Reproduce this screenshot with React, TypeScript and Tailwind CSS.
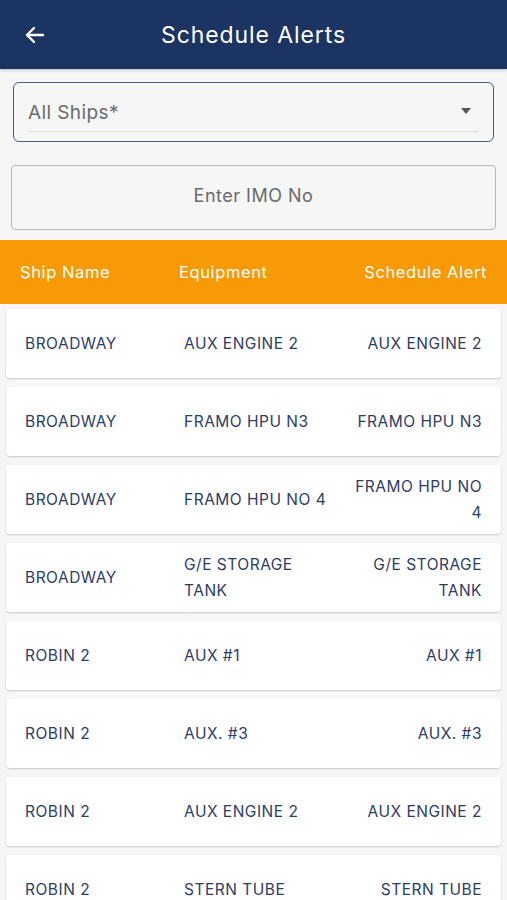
import React from "react";

const rows: [string, string[], string[]][] = [
  ["BROADWAY", ["AUX ENGINE 2"], ["AUX ENGINE 2"]],
  ["BROADWAY", ["FRAMO HPU N3"], ["FRAMO HPU N3"]],
  ["BROADWAY", ["FRAMO HPU NO 4"], ["FRAMO HPU NO", "4"]],
  ["BROADWAY", ["G/E STORAGE", "TANK"], ["G/E STORAGE", "TANK"]],
  ["ROBIN 2", ["AUX #1"], ["AUX #1"]],
  ["ROBIN 2", ["AUX. #3"], ["AUX. #3"]],
  ["ROBIN 2", ["AUX ENGINE 2"], ["AUX ENGINE 2"]],
  ["ROBIN 2", ["STERN TUBE"], ["STERN TUBE"]],
];

export default function App() {
  return (
    <div
      className="w-[507px] h-[900px] overflow-hidden bg-[#f6f6f6]"
      style={{ fontFamily: "Inter, 'Open Sans', sans-serif" }}
    >
      <div className="h-[69px] bg-[#1c3461] flex items-center relative shadow-[0_1px_3px_rgba(0,0,0,0.25)]">
        <svg
          className="absolute left-[23px] top-[23px]"
          width="24"
          height="24"
          viewBox="0 0 24 24"
          fill="none"
          stroke="white"
          strokeWidth="2.4"
          strokeLinecap="round"
          strokeLinejoin="round"
        >
          <path d="M20 12H4.5" />
          <path d="M11 5l-7 7 7 7" />
        </svg>
        <div className="w-full text-center text-white text-[23px] tracking-[0.9px] pt-[1px]">Schedule Alerts</div>
      </div>

      <div className="mx-[13px] mt-[13px] h-[60px] border-[1.5px] border-[#4b5c7c] rounded-[6px] px-[14px] pt-[18px] relative">
        <div className="text-[19px] text-[#6b6b6b] leading-[24px] tracking-[0.4px]">All Ships*</div>
        <div className="h-px bg-[#dedede] mt-[6px]" />
        <div className="absolute right-[22px] top-[25px] w-0 h-0 border-l-[5px] border-r-[5px] border-t-[6px] border-l-transparent border-r-transparent border-t-[#555]" />
      </div>

      <div className="mx-[11px] mt-[23px] h-[65px] border border-[#b9b9b9] rounded-[4px] flex items-center justify-center pb-[5px] text-[18px] text-[#6a6a6a] tracking-[0.5px]">
        Enter IMO No
      </div>

      <div className="mt-[10px] h-[64px] bg-[#f79a05] flex items-center px-[20px] text-white text-[16.5px] tracking-[0.6px]">
        <div className="w-[159px]">Ship Name</div>
        <div className="flex-1">Equipment</div>
        <div>Schedule Alert</div>
      </div>

      <div className="flex flex-col gap-[9px] mt-[5px] px-[6px]">
        {rows.map(([ship, eq, al], i) => (
          <div
            key={i}
            className="h-[69px] bg-white rounded-[4px] shadow-[0_1px_2px_rgba(0,0,0,0.18)] flex items-center pl-[19px] pr-[19px] text-[15.5px] text-[#2d3c66] leading-[26px] tracking-[0.5px]"
          >
            <div className="w-[159px]">{ship}</div>
            <div className="flex-1">
              {eq.map((l, j) => (
                <div key={j}>{l}</div>
              ))}
            </div>
            <div className="text-right">
              {al.map((l, j) => (
                <div key={j}>{l}</div>
              ))}
            </div>
          </div>
        ))}
      </div>
    </div>
  );
}
